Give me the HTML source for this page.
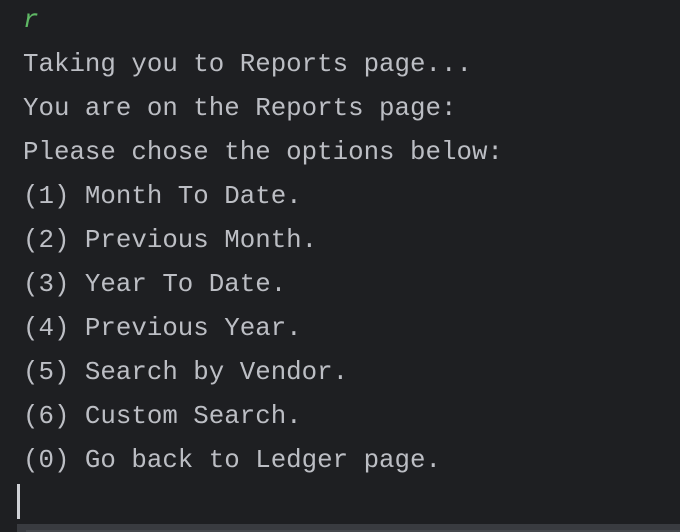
<!DOCTYPE html>
<html><head><style>
html,body{margin:0;padding:0;width:680px;height:532px;overflow:hidden;background:#1e1f22;}
.t{position:absolute;left:23px;top:-1px;font-family:"Liberation Mono",monospace;font-size:25.8px;line-height:44px;color:#bcbec4;white-space:pre;}
.g{color:#5fb865;font-style:italic;}
.cur{position:absolute;left:17px;top:484px;width:3px;height:35px;background:#cfd1d6;}
.bar{position:absolute;left:17px;top:524px;width:663px;height:8px;background:#393b40;}
.bar2{position:absolute;left:26px;top:530px;width:654px;height:2px;background:#45474c;}
</style></head><body>
<div class="t"><span class="g">r</span>
Taking you to Reports page...
You are on the Reports page:
Please chose the options below:
(1) Month To Date.
(2) Previous Month.
(3) Year To Date.
(4) Previous Year.
(5) Search by Vendor.
(6) Custom Search.
(0) Go back to Ledger page.</div>
<div class="cur"></div>
<div class="bar"></div><div class="bar2"></div>
</body></html>
